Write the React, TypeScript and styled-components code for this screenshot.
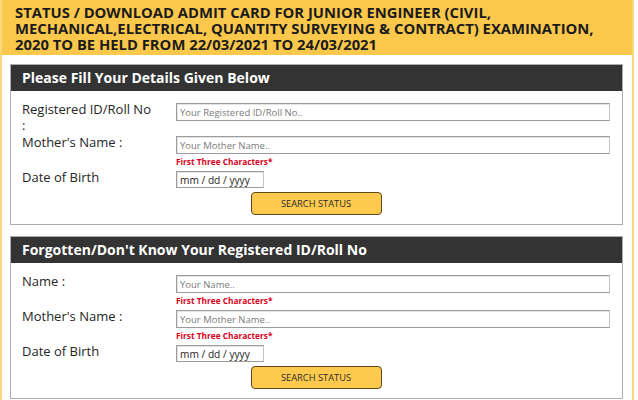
import styled, { createGlobalStyle } from "styled-components";

const GlobalStyle = createGlobalStyle`
  * { box-sizing: border-box; }
  body {
    margin: 0;
    background: #ffffff;
    font-family: "Open Sans", "Liberation Sans", sans-serif;
  }
`;

const Page = styled.div`
  width: 634px;
  min-height: 400px;
  border-left: 2px solid #fbd877;
  border-right: 2px solid #fbd877;
`;

const TitleBar = styled.div`
  background: #fcc84b;
  padding: 4px 22px 5px 13px;
  height: 55px;
  font-size: 14.8px;
  font-weight: 700;
  line-height: 16px;
  color: #1b1b1b;
`;

const Main = styled.div`
  padding: 9px 9px 0 8px;
`;

const Panel = styled.section`
  border: 1px solid #adadad;
  background: #fff;
  margin-bottom: 11px;
`;

const PanelHead = styled.h2`
  margin: 0;
  height: 26px;
  line-height: 26px;
  padding: 0 11px;
  background: #333333;
  color: #ffffff;
  font-size: 14px;
  font-weight: 700;
`;

const PanelBody = styled.div`
  padding: 12px 12px 9px 11px;
`;

const Row = styled.div`
  display: grid;
  grid-template-columns: 154px 1fr;
  margin-bottom: 3px;
`;

const Label = styled.label`
  max-width: 131px;
  margin-top: -2px;
  font-size: 13px;
  line-height: 16px;
  color: #262626;
`;

const Field = styled.div`
  display: flex;
  flex-direction: column;
  align-items: flex-start;
`;

const TextInput = styled.input<{ $w?: number; $h?: number }>`
  width: ${(p) => (p.$w ? `${p.$w}px` : "100%")};
  height: ${(p) => p.$h ?? 18}px;
  margin: 0;
  padding: 0 3px;
  border: 1px solid #9c9c9c;
  border-right-color: #c4c4c4;
  box-shadow: inset 1px 1px 0 #e4e4e4;
  background: #fff;
  font-family: "Open Sans", "Liberation Sans", sans-serif;
  font-size: 9.5px;
  color: #222;
  outline: none;

  &::placeholder {
    color: #7a7a7a;
  }
`;

const DateInput = styled(TextInput)`
  font-size: 10.2px;
  &::placeholder {
    color: #1e1e1e;
  }
`;

const Note = styled.span`
  margin-top: 2px;
  font-size: 8.3px;
  line-height: 12px;
  font-weight: 700;
  color: #d8001c;
`;

const Actions = styled.div`
  display: flex;
  justify-content: center;
  padding-top: 1px;
`;

const SearchButton = styled.button`
  width: 131px;
  height: 23px;
  border: 1px solid #5c4a1c;
  border-radius: 4px;
  background: #fdca4e;
  font-family: "Open Sans", "Liberation Sans", sans-serif;
  font-size: 9.3px;
  color: #2a2a2a;
  cursor: pointer;
`;

type FieldDef = {
  label: string;
  placeholder: string;
  note?: boolean;
  date?: boolean;
};

const FormPanel = ({ title, fields }: { title: string; fields: FieldDef[] }) => (
  <Panel>
    <PanelHead>{title}</PanelHead>
    <PanelBody>
      {fields.map((f) => (
        <Row key={f.label}>
          <Label>{f.label}</Label>
          <Field>
            {f.date ? (
              <DateInput $w={88} $h={17} placeholder={f.placeholder} />
            ) : (
              <TextInput placeholder={f.placeholder} />
            )}
            {f.note && <Note>First Three Characters*</Note>}
          </Field>
        </Row>
      ))}
      <Actions>
        <SearchButton>SEARCH STATUS</SearchButton>
      </Actions>
    </PanelBody>
  </Panel>
);

const App = () => {
  return (
    <Page>
      <GlobalStyle />
      <TitleBar>
        STATUS / DOWNLOAD ADMIT CARD FOR JUNIOR ENGINEER (CIVIL,
        MECHANICAL,ELECTRICAL, QUANTITY SURVEYING &amp; CONTRACT) EXAMINATION,
        2020 TO BE HELD FROM 22/03/2021 TO 24/03/2021
      </TitleBar>
      <Main>
        <FormPanel
          title="Please Fill Your Details Given Below"
          fields={[
            { label: "Registered ID/Roll No :", placeholder: "Your Registered ID/Roll No.." },
            { label: "Mother's Name :", placeholder: "Your Mother Name..", note: true },
            { label: "Date of Birth", placeholder: "mm / dd / yyyy", date: true },
          ]}
        />
        <FormPanel
          title="Forgotten/Don't Know Your Registered ID/Roll No"
          fields={[
            { label: "Name :", placeholder: "Your Name..", note: true },
            { label: "Mother's Name :", placeholder: "Your Mother Name..", note: true },
            { label: "Date of Birth", placeholder: "mm / dd / yyyy", date: true },
          ]}
        />
      </Main>
    </Page>
  );
};

export default App;
